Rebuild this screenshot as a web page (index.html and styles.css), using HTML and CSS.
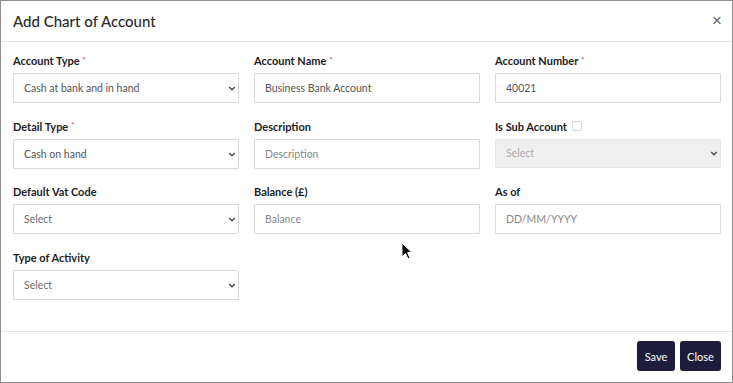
FILE: index.html
```html
<!DOCTYPE html>
<html lang="en">
<head>
    <meta charset="UTF-8">
    <meta name="viewport" content="width=device-width, initial-scale=1.0">
    <title>Add Chart of Account</title>
    <link rel="stylesheet" href="styles.css">
</head>
<body>

<div class="modal">
    <div class="modal-header">
        <div class="modal-title">Add Chart of Account</div>
        <button class="close-x" type="button">&times;</button>
    </div>

    <div class="modal-body">
        <div class="field">
            <label>Account Type <span class="req">*</span></label>
            <div class="select-wrap">
                <select><option>Cash at bank and in hand</option></select>
                <svg class="chevron" viewBox="0 0 10 6"><path d="M1.5 1.2 L5 4.6 L8.5 1.2" /></svg>
            </div>
        </div>
        <div class="field">
            <label>Account Name <span class="req">*</span></label>
            <input type="text" value="Business Bank Account">
        </div>
        <div class="field">
            <label>Account Number <span class="req">*</span></label>
            <input type="text" value="40021">
        </div>

        <div class="field">
            <label>Detail Type <span class="req">*</span></label>
            <div class="select-wrap">
                <select><option>Cash on hand</option></select>
                <svg class="chevron" viewBox="0 0 10 6"><path d="M1.5 1.2 L5 4.6 L8.5 1.2" /></svg>
            </div>
        </div>
        <div class="field">
            <label>Description</label>
            <input type="text" placeholder="Description">
        </div>
        <div class="field">
            <label>Is Sub Account <span class="check"></span></label>
            <div class="select-wrap disabled">
                <select disabled><option>Select</option></select>
                <svg class="chevron" viewBox="0 0 10 6"><path d="M1.5 1.2 L5 4.6 L8.5 1.2" /></svg>
            </div>
        </div>

        <div class="field">
            <label>Default Vat Code</label>
            <div class="select-wrap">
                <select class="muted"><option>Select</option></select>
                <svg class="chevron" viewBox="0 0 10 6"><path d="M1.5 1.2 L5 4.6 L8.5 1.2" /></svg>
            </div>
        </div>
        <div class="field">
            <label>Balance (&pound;)</label>
            <input type="text" placeholder="Balance">
        </div>
        <div class="field">
            <label>As of</label>
            <input type="text" placeholder="DD/MM/YYYY">
        </div>

        <div class="field">
            <label>Type of Activity</label>
            <div class="select-wrap">
                <select class="muted"><option>Select</option></select>
                <svg class="chevron" viewBox="0 0 10 6"><path d="M1.5 1.2 L5 4.6 L8.5 1.2" /></svg>
            </div>
        </div>
    </div>

    <div class="modal-footer">
        <button class="btn" type="button">Save</button>
        <button class="btn" type="button">Close</button>
    </div>

    <svg class="cursor" viewBox="0 0 12 19" width="12" height="19">
        <path d="M1 1 L1 15 L4.5 11.5 L7 17 L9 16 L6.6 10.6 L11 10.6 Z" fill="#000" stroke="#fff" stroke-width="1"/>
    </svg>
</div>

</body>
</html>
```

FILE: styles.css
```css
* {
    box-sizing: border-box;
}
body {
    margin: 0;
    background: #fff;
    font-family: 'Lato', 'Open Sans', sans-serif;
    color: #212529;
}
.modal {
    position: relative;
    width: 733px;
    height: 383px;
    border: 1px solid #8d8d8d;
    background: #fff;
    display: flex;
    flex-direction: column;
}
.modal-header {
    height: 41px;
    border-bottom: 1px solid #e4e6e9;
    display: flex;
    align-items: center;
    justify-content: space-between;
    padding: 0 10px 0 12px;
}
.modal-title {
    font-size: 15px;
    color: #2b2b2b;
    font-weight: 500;
}
.close-x {
    border: none;
    background: none;
    font-family: 'Liberation Sans', sans-serif;
    font-size: 17px;
    color: #666;
    padding: 0;
    line-height: 1;
    margin-top: -1px;
}
.modal-body {
    display: grid;
    grid-template-columns: 226px 226px 226px;
    column-gap: 15px;
    row-gap: 16.5px;
    padding: 12px 11px 31px 12px;
}
.field label {
    display: flex;
    align-items: center;
    gap: 3px;
    height: 13px;
    font-size: 11px;
    font-weight: 700;
    color: #222;
    margin-bottom: 6px;
}
.req {
    color: #e0414b;
    font-size: 8px;
    font-weight: 400;
    margin-top: -2px;
}
.check {
    display: inline-block;
    width: 10px;
    height: 10px;
    border: 1px solid #d4d7db;
    border-radius: 1px;
    margin-left: 2px;
}
input[type="text"], select {
    width: 100%;
    height: 30px;
    border: 1px solid #d5d9de;
    border-radius: 1px;
    padding: 0 11px 0 10px;
    font-family: inherit;
    font-size: 10.5px;
    color: #555;
    background: #fff;
    outline: none;
}
input::placeholder {
    color: #888;
}
select {
    appearance: none;
    -webkit-appearance: none;
}
select.muted {
    color: #6c6c6c;
}
.select-wrap {
    position: relative;
}
.select-wrap.disabled select {
    background: #e9e9e9;
    color: #8a8a8a;
    border-color: #dcdcdc;
    height: 29px;
}
.chevron {
    position: absolute;
    right: 3px;
    top: 13px;
    width: 8px;
    height: 5px;
    fill: none;
    stroke: #444;
    stroke-width: 1.6;
}
.disabled .chevron {
    top: 12px;
}
.modal-footer {
    margin-top: auto;
    border-top: 1px solid #e4e6e9;
    display: flex;
    justify-content: flex-end;
    gap: 5px;
    padding: 9px 11px 11px;
}
.btn {
    height: 30px;
    padding: 0 6px;
    border: none;
    border-radius: 3px;
    background: #1d1d3b;
    color: #fff;
    font-family: inherit;
    font-size: 11px;
    cursor: pointer;
}
.btn:first-child {
    width: 38px;
}
.btn:last-child {
    width: 41px;
}
.cursor {
    position: absolute;
    left: 400px;
    top: 241px;
}
```
